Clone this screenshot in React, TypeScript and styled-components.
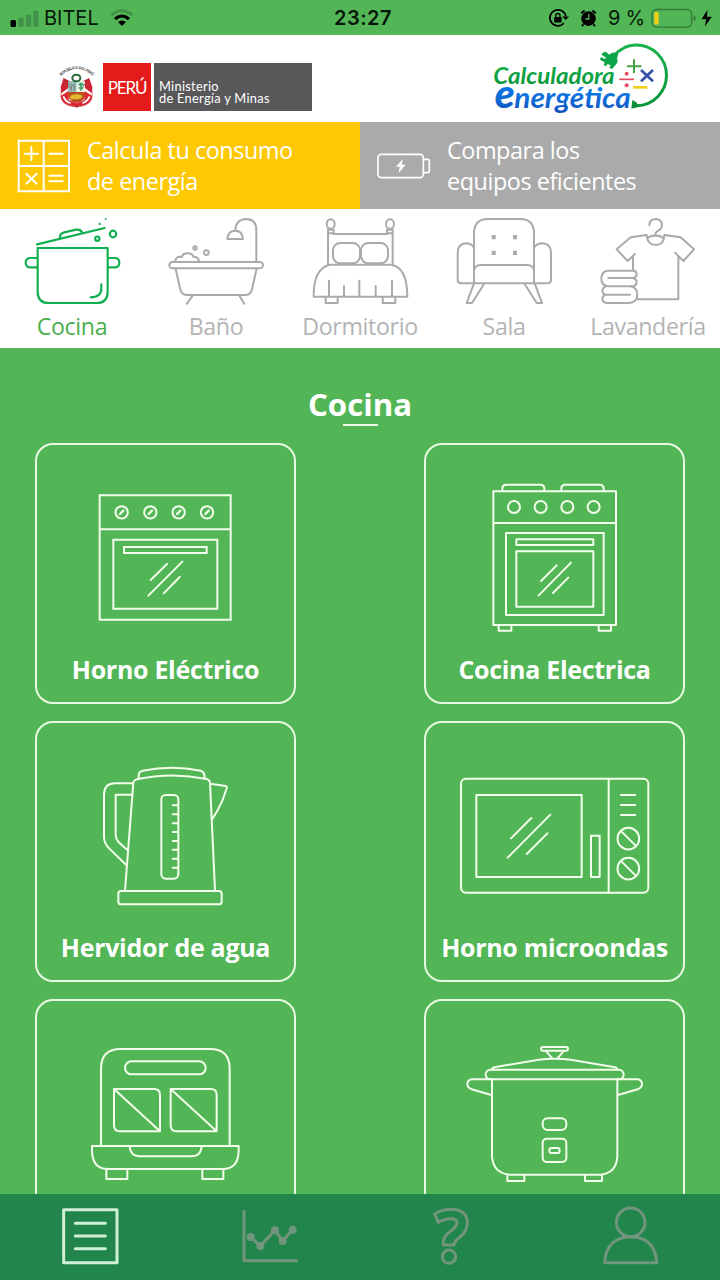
import React from "react";
import styled, { createGlobalStyle } from "styled-components";

const GREEN = "#53b656";

const GlobalStyle = createGlobalStyle`
  * { box-sizing: border-box; }
  body { margin: 0; background: ${GREEN}; font-family: "Open Sans", sans-serif; }
`;

const Screen = styled.div`
  width: 720px;
  height: 1280px;
  display: flex;
  flex-direction: column;
  overflow: hidden;
  background: ${GREEN};
`;

const StatusBar = styled.div`
  height: 35px;
  flex: none;
  display: grid;
  grid-template-columns: 1fr auto 1fr;
  align-items: center;
  padding: 1px 7px 0 10px;
  font: 400 20px/24px Inter, sans-serif;
  color: #06180a;
`;

const StatusGroup = styled.div<{ $end?: boolean }>`
  display: flex;
  align-items: center;
  justify-content: ${(p) => (p.$end ? "flex-end" : "flex-start")};
`;

const Carrier = styled.span`
  margin: 0 11px 0 5px;
  font-size: 20px;
`;

const Clock = styled.span`
  padding-left: 3px;
  font-weight: 600;
  font-size: 20px;
  letter-spacing: 0.5px;
`;

const Percent = styled.span`
  margin: 0 6px 0 8px;
  letter-spacing: -0.2px;
`;

const Header = styled.header`
  height: 87px;
  flex: none;
  display: flex;
  justify-content: space-between;
  align-items: flex-start;
  padding: 5px 50px 0 58px;
  background: #fff;
`;

const Ministry = styled.div`
  display: flex;
  margin-top: 23px;
  height: 48px;
  color: #fff;
  font-family: Lato, sans-serif;
`;

const Country = styled.div`
  width: 48px;
  margin: 0 3px 0 5px;
  display: flex;
  align-items: center;
  justify-content: center;
  background: #e31b1a;
  font-size: 17px;
  letter-spacing: -1.1px;
`;

const MinistryName = styled.div`
  width: 158px;
  padding: 17px 0 0 5px;
  background: #58585a;
  font: 400 12.8px/12px Lato, sans-serif;
  letter-spacing: 0.3px;
  white-space: nowrap;
`;

const Tabs = styled.nav`
  display: flex;
  flex: none;
  height: 87px;
`;

const Tab = styled.div<{ $active?: boolean }>`
  flex: 1;
  display: flex;
  align-items: center;
  gap: 15px;
  padding-left: 16px;
  background: ${(p) => (p.$active ? "#fec802" : "#aaaaaa")};
  color: #fff;
  font-size: 23.4px;
  letter-spacing: -0.45px;
  line-height: 31px;
`;

const Categories = styled.nav`
  display: grid;
  grid-template-columns: repeat(5, 144px);
  flex: none;
  height: 139px;
  background: #fff;
`;

const Category = styled.div<{ $active?: boolean }>`
  display: flex;
  flex-direction: column;
  align-items: center;
  padding-top: 6px;
  color: ${(p) => (p.$active ? "#4caf50" : "#b4b4b4")};
  font-size: 23.2px;
  letter-spacing: -0.35px;
  line-height: 30px;
  white-space: nowrap;
  svg { color: ${(p) => (p.$active ? "#12b050" : "#aaaaaa")}; margin-bottom: 4px; }
`;

const Content = styled.main`
  flex: 1;
  min-height: 0;
  overflow: hidden;
`;

const Title = styled.h1`
  display: flex;
  flex-direction: column;
  align-items: center;
  height: 95px;
  margin: 0;
  padding-top: 36px;
  color: #fff;
  font-size: 31.2px;
  line-height: 40px;
  &::after {
    content: "";
    width: 35px;
    height: 2px;
    background: #eefbe9;
  }
`;

const Grid = styled.div`
  display: grid;
  grid-template-columns: 261px 261px;
  justify-content: space-between;
  row-gap: 17px;
  padding: 0 35px;
`;

const Card = styled.div`
  height: 261px;
  display: flex;
  flex-direction: column;
  align-items: center;
  border: 2px solid #e6f9e2;
  border-radius: 18px;
  color: #fff;
  font-weight: 700;
  font-size: 25px;
  letter-spacing: -0.3px;
  line-height: 38px;
  white-space: nowrap;
`;

const BottomNav = styled.nav`
  height: 86px;
  flex: none;
  display: grid;
  grid-template-columns: repeat(4, 180px);
  justify-items: center;
  padding-top: 12px;
  background: #22854c;
`;

const Line = styled.svg`
  display: block;
  flex: none;
  fill: none;
  stroke: currentColor;
  stroke-linecap: round;
  stroke-linejoin: round;
`;

const CardArt = styled(Line)`
  color: #f2fdec;
  stroke-width: 6;
`;

const NavArt = styled(Line)<{ $active?: boolean }>`
  color: ${(p) => (p.$active ? "#d0f0d6" : "#72957d")};
  stroke-width: 9;
`;

const Signal = () => (
  <svg width="29" height="20" viewBox="0 0 29 20">
    <rect x="0.5" y="12" width="5.5" height="7" rx="1.5" fill="#000" />
    <g fill="#41934a">
      <rect x="8.2" y="9.5" width="5.5" height="9.5" rx="1.5" />
      <rect x="15.8" y="6.5" width="5.5" height="12.5" rx="1.5" />
      <rect x="23.2" y="2.5" width="5.3" height="16.5" rx="1.5" />
    </g>
  </svg>
);

const Wifi = () => (
  <svg width="24" height="18" viewBox="0 0 24 18" fill="none" strokeWidth="3">
    <path d="M1.5 6 Q12 -2.5 22.5 6" stroke="#41934a" />
    <path d="M5 10 Q12 4 19 10" stroke="#000" />
    <path d="M8 13 Q12 10 16 13 L12 17Z" fill="#000" />
  </svg>
);

const StatusIcons = () => (
  <svg width="52" height="22" viewBox="0 0 52 22" fill="none" stroke="#000" strokeWidth="1.7">
    <path d="M16 16 A8 8 0 1 1 17.8 9.5" />
    <path d="M14.2 9.5H21L17.8 13Z" fill="#000" stroke="none" />
    <rect x="6.2" y="10" width="7.4" height="5.6" rx="0.6" fill="#000" stroke="none" />
    <path d="M7.8 10V8.6a2.1 2.1 0 0 1 4.2 0V10" strokeWidth="1.3" />
    <circle cx="40.5" cy="11.6" r="7.3" fill="#000" stroke="none" />
    <path d="M33.2 6.2l3.4-2.8M47.8 6.2l-3.4-2.8M35.5 17.3l-1.5 1.7M45.5 17.3l1.5 1.7" strokeWidth="2" />
    <path d="M40.8 7V12H37.3" stroke={GREEN} strokeWidth="1.3" />
  </svg>
);

const Battery = () => (
  <svg width="62" height="22" viewBox="0 0 62 22">
    <rect x="1" y="2.5" width="39.6" height="17.6" rx="4.5" fill="none" stroke="#35793b" strokeWidth="1.4" />
    <rect x="3.4" y="5" width="4.2" height="12.6" rx="1.4" fill="#f7ce19" />
    <path d="M42.6 8v6.5q2-1 2-3.2t-2-3.3" fill="#35793b" />
    <path d="M56.5 2.8L50.5 12.2h4.7l-1.4 7.4 7-9.8h-4.8z" fill="#000" />
  </svg>
);

const CoatOfArms = () => (
  <svg width="40" height="48" viewBox="180 189 120 144" fill="none">
    <path id="crest-arc" d="M189 228 Q236 186 284 228" />
    <text fontSize="11.5" fontWeight="700" fill="#333" fontFamily="Lato, sans-serif">
      <textPath href="#crest-arc" textLength="106">REPÚBLICA DEL PERÚ</textPath>
    </text>
    <path d="M197 235 Q186 275 190 298 Q206 322 235 320 Q266 322 281 298 Q286 270 273 235 L255 252 H217Z" fill="#fff" stroke="#c94b50" strokeWidth="2" />
    <path d="M197 235 L188 262 L190 280 L214 262 L220 245Z M273 235 L283 262 L281 280 L258 262 L250 245Z" fill="#cf2534" />
    <path d="M188 288 L212 272 V300 L236 310 L259 300 V272 L283 288 Q281 309 259 316 L236 321 L211 316 Q190 309 188 288Z" fill="#d92a36" />
    <path d="M196 289 Q204 307 218 309 M275 289 Q266 307 253 309" stroke="#fff" strokeWidth="5" />
    <path d="M210 244H236V276H210Z" fill="#92bfc0" />
    <path d="M236 244H261V276H236Z" fill="#eef5e8" />
    <path d="M210 276H262V287Q259 304 236 309Q213 304 210 287Z" fill="#c94722" />
    <path d="M216 287Q232 276 254 286Q255 297 239 299H218" fill="#e9b630" stroke="#765f20" strokeWidth="2" />
    <path d="M217 250l5 6 5 1 4-5M220 258v14M229 258v14" stroke="#816f5d" strokeWidth="3" />
    <path d="M249 272V250M243 256q6-12 13 0M242 264h13" stroke="#3e9c68" strokeWidth="5" />
    <ellipse cx="235" cy="234" rx="12" ry="10" stroke="#286a3a" strokeWidth="6" />
    <path d="M202 238L216 263M269 238L254 263" stroke="#73343a" strokeWidth="2" />
    <path d="M232 314h8v8h-8z" fill="#bd2430" />
  </svg>
);

const AppLogo = () => (
  <svg width="180" height="78" viewBox="390 120 540 234" fill="none">
    <defs>
      <linearGradient id="leaf" x1="0" y1="0" x2="0" y2="1">
        <stop offset="0" stopColor="#17b24c" />
        <stop offset="1" stopColor="#07943b" />
      </linearGradient>
      <linearGradient id="sea" x1="0" y1="0" x2="0" y2="1">
        <stop offset="0.2" stopColor="#0a83f2" />
        <stop offset="1" stopColor="#1651b8" />
      </linearGradient>
    </defs>
    <path d="M761 169 Q788 135 827 135 A91 91 0 0 1 830 317" stroke="url(#leaf)" strokeWidth="9" />
    <path d="M775 160 Q758 153 748 164 L737 155 L728 158 L725 164 L738 173 L735 177 L723 171 L720 179 L734 187 L731 195 L738 199 L743 192 L752 196 L748 203 L756 207 L764 198 Q777 185 771 176Z" fill="#0ba548" />
    <path d="M817 300 L831 308 L832 322 L814 326Z" fill="#078e38" />
    <path d="M822 178V219M801 199H844" stroke="#46a247" strokeWidth="6" />
    <path d="M778 238H822" stroke="#e24a5d" strokeWidth="5" />
    <circle cx="800" cy="221" r="6" fill="#e24a5d" />
    <circle cx="800" cy="256" r="6" fill="#e24a5d" />
    <path d="M843 210L879 244M879 210L843 244" stroke="#3552a8" strokeWidth="8" />
    <path d="M819 262H862" stroke="#f4cf1b" strokeWidth="8" />
    <g fontFamily="Lato, sans-serif" fontWeight="900" fontStyle="italic">
      <text x="400" y="251" fontSize="67" fontWeight="700" fill="url(#leaf)" textLength="364" lengthAdjust="spacingAndGlyphs">Calculadora</text>
      <text x="404" y="325" fontSize="122" fill="url(#sea)" textLength="60" lengthAdjust="spacingAndGlyphs">e</text>
      <text x="463" y="325" fontSize="88" fontWeight="700" fill="url(#sea)" textLength="349" lengthAdjust="spacingAndGlyphs">nergética</text>
    </g>
  </svg>
);

const CalculatorIcon = () => (
  <Line width="56" height="56" viewBox="48 52 168 168" strokeWidth="6">
    <path d="M56 60H207V212H56ZM131 60V212M56 136H207" strokeLinejoin="miter" />
    <path d="M74 99H114M94 79V119M148 99H188M79 159L110 189M110 159L79 189M148 165H188M148 182H188" />
  </Line>
);

const BatteryIcon = () => (
  <Line width="56" height="56" viewBox="48 52 168 168" strokeWidth="5">
    <rect x="54" y="101" width="136" height="70" rx="10" />
    <path d="M190 116H203Q208 116 208 121V151Q208 156 203 156H190" />
    <path d="M129 114L108 138H119L116 157L137 132H125Z" fill="currentColor" stroke="none" />
  </Line>
);

const PotArt = () => (
  <Line width="100" height="92" viewBox="66 285 300 276" strokeWidth="6.5">
    <path d="M113 384H323V515Q323 549 290 549H146Q113 549 113 515ZM113 414H92Q77 414 77 428T92 442H113M323 414H344Q358 414 358 428T344 442H323M304 493V505Q304 532 272 532M111 373L314 324M180 354Q178 342 190 338L228 329Q243 327 247 339" />
    <ellipse cx="339" cy="342" rx="9.5" ry="10" />
    <circle cx="292" cy="356" r="6.5" />
    <circle cx="299" cy="312" r="1.5" strokeWidth="4" />
    <circle cx="317" cy="297" r="1" strokeWidth="4" />
  </Line>
);

const BathArt = () => (
  <Line width="100" height="92" viewBox="498 285 300 276" strokeWidth="6">
    <rect x="508" y="426" width="281" height="19" rx="9.5" />
    <path d="M527 446L540 505Q544 525 560 525H738Q752 525 756 508L770 446M578 527L561 551M718 527L733 551M769 425V330Q769 297 738 297Q708 298 706 330M682 357H729Q727 332 706 332Q684 332 682 357ZM525 424Q530 406 545 411Q549 399 564 400Q578 401 580 410Q596 410 597 424" />
    <circle cx="585" cy="384" r="5" />
    <circle cx="619" cy="398" r="7" />
  </Line>
);

const BedArt = () => (
  <Line width="100" height="92" viewBox="930 285 300 276" strokeWidth="6">
    <ellipse cx="992" cy="312" rx="12" ry="14.5" />
    <ellipse cx="1170" cy="312" rx="12" ry="14.5" />
    <path d="M984 328V432M984 329H1001V342M1001 342H1161M984 340H1001M1178 328V432M1178 329H1161V342M1178 340H1161" />
    <rect x="999" y="369" width="81" height="61" rx="22" />
    <rect x="1083" y="369" width="81" height="61" rx="22" />
    <path d="M990 434H1172Q1222 440 1222 530H941Q940 445 990 434ZM987 482V528M1032 498V528M1078 482V528M1127 498V528M1176 482V528M977 532V549H1013V532M1148 532V549H1186V532" />
  </Line>
);

const ArmchairArt = () => (
  <Line width="100" height="92" viewBox="282 285 300 276" strokeWidth="6">
    <path d="M342 490V340Q342 297 385 297H480Q522 297 522 340V490M342 455Q342 435 362 435H502Q522 435 522 455M342 383Q335 370 318 370Q293 372 293 398V480Q293 490 303 490H562Q573 490 573 480V398Q573 372 548 370Q530 370 522 383M342 490L320 549H336L372 492M524 490L546 549H530L494 492" />
    <path d="M395 345h12v13h-12zM459 345h12v13h-12zM395 392h12v13h-12zM459 392h12v13h-12z" fill="currentColor" stroke="none" />
  </Line>
);

const LaundryArt = () => (
  <Line width="100" height="92" viewBox="714 285 300 276" strokeWidth="6">
    <path d="M868 316Q868 297 888 297Q906 299 906 316Q906 328 891 334Q886 337 886 347M860 345L812 352L770 388L803 423L825 402M819 408V450M913 345L962 352L1002 388L970 423L945 398M955 408V538H834M860 345Q862 375 887 375T913 345M864 353Q873 346 886 347Q900 346 908 353M742 452H822Q830 454 830 463T820 474H745M742 452Q724 455 724 476T745 499H820Q830 497 830 487T820 474M737 500Q727 503 727 512T737 524H810M737 524Q727 528 727 537T740 549H808Q832 545 832 524Q832 504 815 500" />
  </Line>
);

const OvenArt = () => (
  <CardArt width="257" height="205" viewBox="21 210 771 615">
    <path d="M209 361H602V734H209ZM209 463H602M250 494H562V701H250ZM282 516H530V534H282Z" strokeLinejoin="miter" />
    {[275, 361, 446, 531].map((x) => (
      <React.Fragment key={x}>
        <circle cx={x} cy="412" r="18.5" />
        <path d={`M${x - 5} 417l10 -10`} strokeWidth="7" />
      </React.Fragment>
    ))}
    <path d="M362 615L411 567M355 662L457 560M401 655L449 606" />
  </CardArt>
);

const StoveArt = () => (
  <CardArt width="257" height="205" viewBox="18 30 771 615">
    <path d="M220 169H588V570H220ZM220 264H588M258 294H551V540H258ZM289 313H520V330H289ZM289 349H520V515H289ZM247 169V161Q247 149 259 149H361Q373 149 373 161V169M424 169V161Q424 149 436 149H539Q551 149 551 161V169M236 570V587H274V570M536 570V587H573V570" />
    {[282, 362, 442, 521].map((x) => (
      <circle key={x} cx={x} cy="216" r="18" />
    ))}
    <path d="M363 438L410 391M356 481L453 383M399 474L445 428" />
  </CardArt>
);

const KettleArt = () => (
  <CardArt width="257" height="205" viewBox="21 24 771 615">
    <path d="M285 527L310 203Q311 196 320 193Q425 170 530 192Q539 195 540 203L555 527M326 189V182Q326 170 338 167Q425 149 512 167Q524 170 524 188M310 205H255Q222 205 222 240V365Q222 385 238 401L289 450M306 239H257V360Q257 372 266 382L293 406M541 206L586 213Q592 215 590 221L577 257Q563 289 547 312" />
    <rect x="265" y="528" width="310" height="40" rx="8" />
    <rect x="394" y="240" width="51" height="251" rx="13" />
    {[271, 298, 325, 351, 378, 404, 431, 458].map((y) => (
      <path key={y} d={`M428 ${y}H444`} />
    ))}
  </CardArt>
);

const MicrowaveArt = () => (
  <CardArt width="257" height="205" viewBox="18 24 771 615">
    <rect x="123" y="191" width="562" height="342" rx="15" />
    <path d="M566 191V533M169 240H485V486H169ZM513 362H539V486H513ZM603 240H646M603 270H646M603 300H646" />
    <circle cx="625" cy="371" r="32.5" />
    <circle cx="625" cy="461" r="32.5" />
    <path d="M604 349L647 392M604 439L647 482M273 370L334 309M263 428L391 299M320 417L382 355" />
  </CardArt>
);

const SandwichMakerArt = () => (
  <CardArt width="257" height="205" viewBox="21 33 771 615">
    <path d="M213 468V236Q213 177 272 177H540Q599 177 599 236V468M186 468H626V480Q626 537 578 537H234Q186 537 186 480ZM299 468Q301 499 330 499H485Q513 499 515 468M229 537V567H292V537M517 537V567H580V537" />
    <rect x="285" y="214" width="242" height="39" rx="19.5" />
    <path d="M252 297H372Q390 297 390 315V424H270Q252 424 252 406ZM252 297L390 424M422 297H542Q560 297 560 315V424H440Q422 424 422 406ZM422 297L560 424" />
  </CardArt>
);

const RiceCookerArt = () => (
  <CardArt width="257" height="205" viewBox="18 33 771 615">
    <rect x="363" y="171" width="81" height="11" rx="5.5" />
    <path d="M379 184L397 206M430 184L412 206M216 238Q217 232 227 231L356 209Q404 204 452 209L581 231Q591 232 592 238M216 268V498Q219 550 270 554H540Q590 550 592 498V268M216 268H157Q142 269 142 283Q142 293 155 298L214 315M592 268H652Q666 269 666 283Q666 293 653 298L594 315M262 556V573H313V556M495 556V573H546V556" />
    <rect x="197" y="239" width="414" height="29" rx="14.5" />
    <rect x="368" y="385" width="71" height="35" rx="15" />
    <rect x="368" y="446" width="71" height="70" rx="12" />
    <rect x="388" y="474" width="31" height="15" rx="7" />
  </CardArt>
);

const categories = [
  { label: "Cocina", Art: PotArt },
  { label: "Baño", Art: BathArt },
  { label: "Dormitorio", Art: BedArt },
  { label: "Sala", Art: ArmchairArt },
  { label: "Lavandería", Art: LaundryArt },
];

const appliances = [
  { label: "Horno Eléctrico", Art: OvenArt },
  { label: "Cocina Electrica", Art: StoveArt },
  { label: "Hervidor de agua", Art: KettleArt },
  { label: "Horno microondas", Art: MicrowaveArt },
  { label: "", Art: SandwichMakerArt },
  { label: "", Art: RiceCookerArt },
];

export default function App() {
  return (
    <Screen>
      <GlobalStyle />
      <StatusBar>
        <StatusGroup>
          <Signal />
          <Carrier>BITEL</Carrier>
          <Wifi />
        </StatusGroup>
        <Clock>23:27</Clock>
        <StatusGroup $end>
          <StatusIcons />
          <Percent>9 %</Percent>
          <Battery />
        </StatusGroup>
      </StatusBar>
      <Header>
        <Ministry>
          <CoatOfArms />
          <Country>PERÚ</Country>
          <MinistryName>
            Ministerio
            <br />
            de Energía y Minas
          </MinistryName>
        </Ministry>
        <AppLogo />
      </Header>
      <Tabs>
        <Tab $active>
          <CalculatorIcon />
          <span>
            Calcula tu consumo
            <br />
            de energía
          </span>
        </Tab>
        <Tab>
          <BatteryIcon />
          <span>
            Compara los
            <br />
            equipos eficientes
          </span>
        </Tab>
      </Tabs>
      <Categories>
        {categories.map(({ label, Art }, i) => (
          <Category key={label} $active={i === 0}>
            <Art />
            {label}
          </Category>
        ))}
      </Categories>
      <Content>
        <Title>Cocina</Title>
        <Grid>
          {appliances.map(({ label, Art }, i) => (
            <Card key={i}>
              <Art />
              {label}
            </Card>
          ))}
        </Grid>
      </Content>
      <BottomNav>
        <NavArt $active width="60" height="60" viewBox="90 648 180 180">
          <path d="M101 659H261V818H101ZM136 700H226M136 738H226M136 776H226" />
        </NavArt>
        <NavArt width="60" height="60" viewBox="30 48 180 180">
          <path d="M42 64V212H200M62 141L91 168L135 121L158 153L188 119" />
          <g fill="currentColor" stroke="none">
            <circle cx="62" cy="141" r="12" />
            <circle cx="91" cy="168" r="12" />
            <circle cx="135" cy="121" r="12" />
            <circle cx="158" cy="153" r="12" />
            <circle cx="188" cy="119" r="12" />
          </g>
        </NavArt>
        <NavArt width="60" height="60" viewBox="570 48 180 180">
          <path d="M614 72Q637 58 665 58Q712 60 712 98Q712 122 690 141Q672 155 672 165H640Q637 144 656 128Q681 110 681 99Q681 86 662 86Q645 86 625 97Z" />
          <circle cx="657" cy="200" r="20" />
        </NavArt>
        <NavArt width="60" height="60" viewBox="540 648 180 180">
          <circle cx="632" cy="697" r="43" />
          <path d="M554 818Q558 742 632 740Q706 742 710 818Z" />
        </NavArt>
      </BottomNav>
    </Screen>
  );
}
